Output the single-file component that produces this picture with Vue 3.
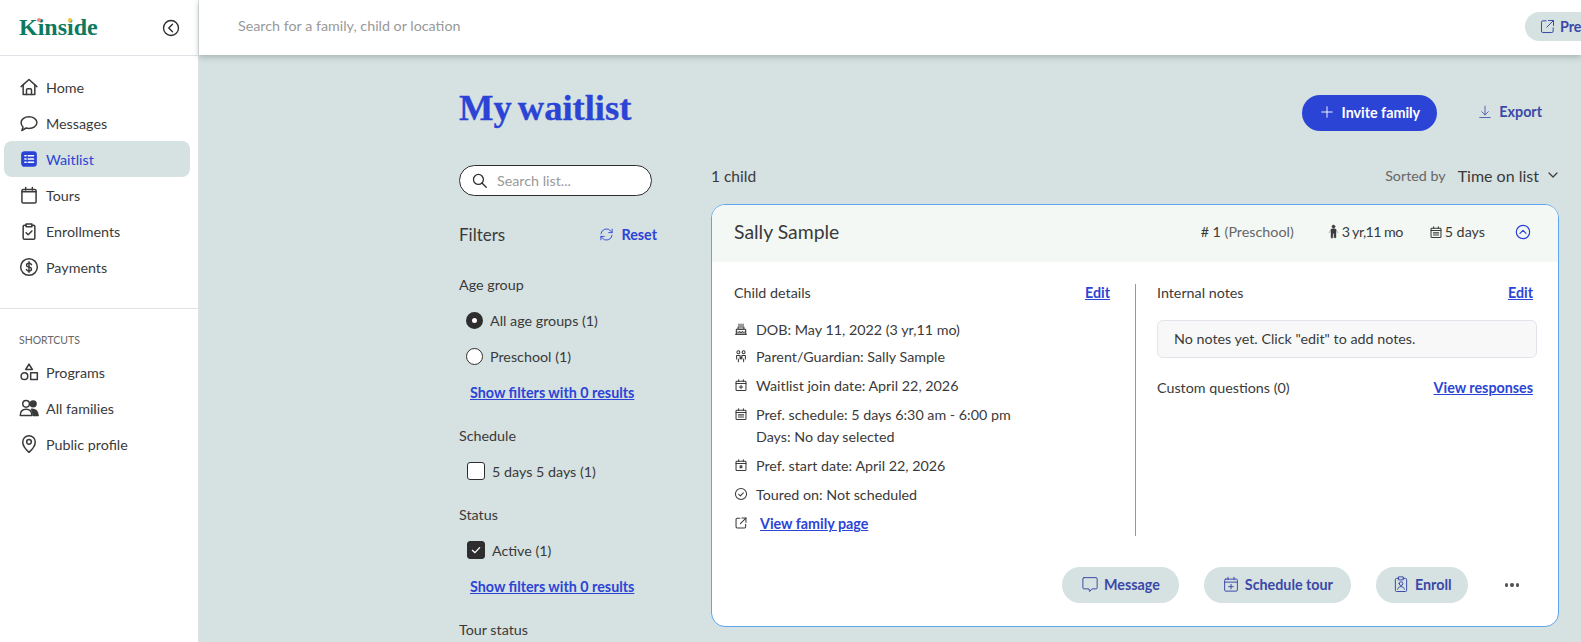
<script setup>
const circle = (cx, cy, r) => `M${cx - r} ${cy}a${r} ${r} 0 1 0 ${r * 2} 0a${r} ${r} 0 1 0 ${-r * 2} 0z`

const icons = {
  home: ['M2.500 11.500 12 3l9.500 8.500', 'M5 9.500V21h14V9.500', 'M9 21v-5.500a1.500 1.500 0 0 1 1.500-1.500h3a1.500 1.500 0 0 1 1.500 1.500V21'],
  message: ['M12 4.500c5 0 9.500 2.800 9.500 7s-4.500 7-9.500 7c-1.200 0-2.400-.2-3.500-.5L3.500 21l1.300-4.200C3.300 15.500 2.500 13.600 2.500 11.500c0-4.200 4.500-7 9.500-7z'],
  calendar: ['M5 5.500h14a1.500 1.500 0 0 1 1.500 1.500v13a1.500 1.500 0 0 1-1.500 1.500H5A1.500 1.500 0 0 1 3.500 20V7A1.500 1.500 0 0 1 5 5.500z', 'M3.500 8h17', 'M8 3v3M16 3v3'],
  clipboard: ['M8.500 5H6.500A1.500 1.500 0 0 0 5 6.500v14A1.500 1.500 0 0 0 6.500 22h11a1.500 1.500 0 0 0 1.500-1.500v-14A1.500 1.500 0 0 0 17.500 5h-2', 'M8.500 3.500h7v3.500h-7z', 'M8.500 14l2.500 2.500 4.500-4.500'],
  dollar: [circle(12, 12, 10), 'M15 9.200c-.5-1.100-1.600-1.700-3-1.700-1.800 0-3 .9-3 2.300 0 3.200 6 1.400 6 4.600 0 1.400-1.300 2.300-3 2.300-1.500 0-2.600-.6-3.100-1.700', 'M12 5.800v12.400'],
  shapes: ['M12 2.500l4 6.500H8z', circle(6.500, 17, 4), 'M14 13h8v8h-8z'],
  pin: ['M12 22s-7.500-6.800-7.500-12.500a7.500 7.500 0 0 1 15 0C19.500 15.200 12 22 12 22z', circle(12, 9.500, 2.800)],
  external: ['M10 4H5.500A2 2 0 0 0 3.500 6v12.500a2 2 0 0 0 2 2H18a2 2 0 0 0 2-2V14', 'M13.500 3.500h7v7', 'M20.500 3.500 11 13'],
  cake: ['M4 12.500h16V21H4z', 'M4 16.500c2 1.500 4 1.500 5.500 0 1.500 1.500 3.500 1.500 5 0 1.500 1.500 3.500 1.500 5.500 0', 'M7 8.500h10v4H7z', 'M8.500 3.500v3M12 3.500v3M15.500 3.500v3', 'M2.500 21h19'],
  family: [circle(7.500, 5.500, 2.500), circle(16.500, 5.500, 2.500), 'M4.500 11h6v6M4.500 11v6M7.500 17v5', 'M13.500 11h6v6M13.500 11v6M16.500 17v5', circle(12, 15, 1.200)],
  calPlus: ['M5 5.500h14a1.500 1.500 0 0 1 1.500 1.500v13a1.500 1.500 0 0 1-1.500 1.500H5A1.500 1.500 0 0 1 3.500 20V7A1.500 1.500 0 0 1 5 5.500z', 'M3.500 9.500h17', 'M8 3v3M16 3v3', 'M12 12.500v6M9 15.500h6'],
  calLines: ['M5 5.500h14a1.500 1.500 0 0 1 1.500 1.500v13a1.500 1.500 0 0 1-1.500 1.500H5A1.500 1.500 0 0 1 3.500 20V7A1.500 1.500 0 0 1 5 5.500z', 'M3.500 9.500h17', 'M8 3v3M16 3v3', 'M7.500 13.500h9M7.500 17h9'],
  calDot: ['M5 5.500h14a1.500 1.500 0 0 1 1.500 1.500v13a1.500 1.500 0 0 1-1.500 1.500H5A1.500 1.500 0 0 1 3.500 20V7A1.500 1.500 0 0 1 5 5.500z', 'M3.500 9.500h17', 'M8 3v3M16 3v3', 'M10.500 13.500h3v3h-3z'],
  circleCheck: [circle(12, 12, 9.500), 'M8 12.500l3 2.800 5-5.300'],
  bubble: ['M4 3.500h16A1.500 1.500 0 0 1 21.500 5v12a1.500 1.500 0 0 1-1.500 1.500h-5.500L11.500 22l-1-3.500H4A1.500 1.500 0 0 1 2.500 17V5A1.500 1.500 0 0 1 4 3.500z'],
  badge: ['M9 2.500h6v4H9z', 'M9 4.500H6A1.500 1.500 0 0 0 4.500 6v14.500A1.500 1.500 0 0 0 6 22h12a1.500 1.500 0 0 0 1.500-1.500V6A1.500 1.500 0 0 0 18 4.500h-3', circle(12, 11.500, 2.500), 'M7.500 19c.5-2.500 2.300-3.500 4.500-3.500s4 1 4.500 3.500']
}

const navItems = [
  { label: 'Home', icon: 'home' },
  { label: 'Messages', icon: 'message' },
  { label: 'Waitlist', icon: 'list', active: true },
  { label: 'Tours', icon: 'calendar' },
  { label: 'Enrollments', icon: 'clipboard' },
  { label: 'Payments', icon: 'dollar' }
]

const shortcuts = [
  { label: 'Programs', icon: 'shapes' },
  { label: 'All families', icon: 'people' },
  { label: 'Public profile', icon: 'pin' }
]

const details = [
  { icon: 'cake', lines: ['DOB: May 11, 2022 (3 yr,11 mo)'] },
  { icon: 'family', lines: ['Parent/Guardian: Sally Sample'] },
  { icon: 'calPlus', lines: ['Waitlist join date: April 22, 2026'] },
  { icon: 'calLines', lines: ['Pref. schedule: 5 days 6:30 am - 6:00 pm', 'Days: No day selected'] },
  { icon: 'calDot', lines: ['Pref. start date: April 22, 2026'] },
  { icon: 'circleCheck', lines: ['Toured on: Not scheduled'] }
]

const actions = [
  { label: 'Message', icon: 'bubble' },
  { label: 'Schedule tour', icon: 'calPlus' },
  { label: 'Enroll', icon: 'badge' }
]
</script>

<template>
  <div class="app-shell">
    <aside class="sidebar">
      <div class="brand">
        <div class="logo">
          Kinside
          <span class="logo-dot dot-pink"></span>
          <span class="logo-dot dot-yellow"></span>
        </div>
        <svg class="collapse-icon" viewBox="0 0 24 24">
          <circle cx="12" cy="12" r="10" />
          <path d="M14 7l-5 5 5 5" />
        </svg>
      </div>

      <nav class="nav-main">
        <div
          v-for="item in navItems"
          :key="item.label"
          class="nav-item"
          :class="{ active: item.active }"
        >
          <svg v-if="item.icon === 'list'" class="nav-icon" viewBox="0 0 24 24">
            <rect class="list-bg" x="3.500" y="3.500" width="17" height="17" rx="3" />
            <path class="list-lines" d="M7 8h1.500M11 8h6.500M7 12h1.500M11 12h6.500M7 16h1.500M11 16h6.500" />
          </svg>
          <svg v-else class="nav-icon" viewBox="0 0 24 24">
            <path v-for="d in icons[item.icon]" :key="d" :d="d" />
          </svg>
          <span>{{ item.label }}</span>
        </div>
      </nav>

      <div class="nav-shortcuts">
        <div class="shortcuts-title">SHORTCUTS</div>
        <div v-for="item in shortcuts" :key="item.label" class="nav-item">
          <svg v-if="item.icon === 'people'" class="nav-icon people" viewBox="0 0 24 24">
            <circle cx="8.500" cy="7" r="4" />
            <circle class="solid" cx="17" cy="7" r="3.500" />
            <path d="M1.500 21c0-5 3-7.500 7-7.500s7 2.500 7 7.500z" />
            <path class="solid" d="M15 13.500c4.500-.5 7.500 2.500 8 7.500h-6c0-3-.5-5.500-2-7.500z" />
          </svg>
          <svg v-else class="nav-icon" viewBox="0 0 24 24">
            <path v-for="d in icons[item.icon]" :key="d" :d="d" />
          </svg>
          <span>{{ item.label }}</span>
        </div>
      </div>
    </aside>

    <div class="main">
      <header class="topbar">
        <span class="top-search">Search for a family, child or location</span>
        <div class="preview-btn">
          <svg viewBox="0 0 24 24">
            <path v-for="d in icons.external" :key="d" :d="d" />
          </svg>
          <span>Preview</span>
        </div>
      </header>

      <div class="content">
        <div class="title-row">
          <h1 class="page-title">My waitlist</h1>
          <div class="title-actions">
            <button class="invite-btn">
              <svg viewBox="0 0 24 24"><path d="M12 3v18M3 12h18" /></svg>
              Invite family
            </button>
            <div class="export">
              <svg viewBox="0 0 24 24"><path d="M12 2v15M6.500 11.500 12 17l5.500-5.500M3 21.500h18" /></svg>
              Export
            </div>
          </div>
        </div>

        <div class="columns">
          <div class="filters">
            <div class="list-search">
              <svg viewBox="0 0 24 24"><circle cx="10.500" cy="10.500" r="7" /><path d="M15.500 15.500 21.500 21.500" /></svg>
              <span>Search list...</span>
            </div>

            <div class="filters-head">
              <span class="filters-title">Filters</span>
              <span class="reset">
                <svg viewBox="0 0 24 24">
                  <path d="M3 11a9 9 0 0 1 16-4.500L21 9M21 3.500V9h-5.500" />
                  <path d="M21 13a9 9 0 0 1-16 4.500L3 15M3 20.500V15h5.500" />
                </svg>
                Reset
              </span>
            </div>

            <div class="filter-label first">Age group</div>
            <div class="option radio"><span class="radio-mark on"></span>All age groups (1)</div>
            <div class="option radio"><span class="radio-mark"></span>Preschool (1)</div>
            <a class="zero-link">Show filters with 0 results</a>

            <div class="filter-label">Schedule</div>
            <div class="option"><span class="check-mark"></span>5 days 5 days (1)</div>

            <div class="filter-label status">Status</div>
            <div class="option">
              <span class="check-mark on">
                <svg viewBox="0 0 24 24"><path d="M6.500 12.500l4 3.500 7-7.500" /></svg>
              </span>
              Active (1)
            </div>
            <a class="zero-link">Show filters with 0 results</a>

            <div class="filter-label">Tour status</div>
          </div>

          <div class="results">
            <div class="results-head">
              <span class="child-count">1 child</span>
              <div class="sort">
                <span class="sort-label">Sorted by</span>
                <span class="sort-value">Time on list</span>
                <svg viewBox="0 0 24 24"><path d="M4 8l8 8 8-8" /></svg>
              </div>
            </div>

            <section class="card">
              <div class="card-head">
                <span class="child-name">Sally Sample</span>
                <div class="head-meta">
                  <span class="rank"># 1 <em>(Preschool)</em></span>
                  <span class="meta age">
                    <svg viewBox="0 0 24 24">
                      <circle cx="12" cy="4" r="2.500" />
                      <path d="M8 22V9.500a2 2 0 0 1 2-2h4a2 2 0 0 1 2 2V22h-3v-7h-2v7zM5 14l3-5M19 14l-3-5" />
                    </svg>
                    3 yr,11 mo
                  </span>
                  <span class="meta days">
                    <svg viewBox="0 0 24 24">
                      <path d="M5 5.500h14a1.500 1.500 0 0 1 1.500 1.500v13a1.500 1.500 0 0 1-1.500 1.500H5A1.500 1.500 0 0 1 3.500 20V7A1.500 1.500 0 0 1 5 5.500z" />
                      <path d="M3.500 9.500h17M8 3v3M16 3v3M7.500 13.500h9M7.500 17h9" />
                    </svg>
                    5 days
                  </span>
                  <svg class="collapse-card" viewBox="0 0 24 24">
                    <circle cx="12" cy="12" r="10" />
                    <path d="M7.500 14l4.500-4.500 4.500 4.500" />
                  </svg>
                </div>
              </div>

              <div class="card-body">
                <div class="details">
                  <div class="section-head">
                    <span>Child details</span>
                    <a class="link">Edit</a>
                  </div>
                  <div v-for="row in details" :key="row.icon" class="detail-row">
                    <svg viewBox="0 0 24 24">
                      <path v-for="d in icons[row.icon]" :key="d" :d="d" />
                    </svg>
                    <div>
                      <div v-for="line in row.lines" :key="line" class="detail-line">{{ line }}</div>
                    </div>
                  </div>
                  <div class="detail-row family-link">
                    <svg viewBox="0 0 24 24">
                      <path v-for="d in icons.external" :key="d" :d="d" />
                    </svg>
                    <a class="link">View family page</a>
                  </div>
                </div>

                <div class="notes">
                  <div class="section-head">
                    <span>Internal notes</span>
                    <a class="link">Edit</a>
                  </div>
                  <div class="notes-box">No notes yet. Click "edit" to add notes.</div>
                  <div class="section-head questions">
                    <span>Custom questions (0)</span>
                    <a class="link">View responses</a>
                  </div>
                </div>
              </div>

              <div class="card-actions">
                <button v-for="action in actions" :key="action.label" class="action-btn">
                  <svg viewBox="0 0 24 24">
                    <path v-for="d in icons[action.icon]" :key="d" :d="d" />
                  </svg>
                  {{ action.label }}
                </button>
                <span class="more"><i></i><i></i><i></i></span>
              </div>
            </section>
          </div>
        </div>
      </div>
    </div>
  </div>
</template>

<style>
html,
body {
  margin: 0;
  overflow: hidden;
}
</style>

<style scoped>
.app-shell {
  display: flex;
  width: 1581px;
  height: 642px;
  overflow: hidden;
  background-color: #d6e1e1;
  color: #3a3a3a;
  font-family: "Lato", "Liberation Sans", sans-serif;
  font-size: 14.3px;
}

svg {
  fill: none;
  stroke: currentColor;
  stroke-width: 1.8;
  stroke-linecap: round;
  stroke-linejoin: round;
  flex-shrink: 0;
}

.sidebar {
  width: 199px;
  flex-shrink: 0;
  background-color: #fff;
  border-right: 1px solid #dfe3e8;
  box-sizing: border-box;
}

.brand {
  display: flex;
  align-items: center;
  justify-content: space-between;
  height: 55px;
  padding: 0 18px 0 19px;
  border-bottom: 1px solid #dfe3e8;
}

.logo {
  position: relative;
  font-family: "Liberation Serif", serif;
  font-weight: 700;
  font-size: 24px;
  color: #0d7a5f;
}

.logo-dot {
  position: absolute;
  top: 4px;
  width: 4px;
  height: 4px;
  border-radius: 50%;
}

.dot-pink {
  left: 18px;
  background-color: #f08a8a;
}

.dot-yellow {
  left: 49px;
  background-color: #f4c542;
}

.collapse-icon {
  width: 18px;
  height: 18px;
  color: #2c2c2c;
}

.nav-main {
  padding-top: 13px;
  padding-bottom: 23px;
  border-bottom: 1px solid #dfe3e8;
}

.nav-item {
  display: flex;
  align-items: center;
  gap: 7px;
  height: 36px;
  margin: 0 8px 0 4px;
  padding-left: 15px;
  border-radius: 8px;
}

.nav-item.active {
  background-color: #d6e1e1;
  color: #2b44d6;
}

.nav-icon {
  width: 20px;
  height: 20px;
}

.list-bg {
  fill: #2b44d6;
  stroke: #2b44d6;
}

.list-lines {
  stroke: #fff;
  stroke-width: 1.8;
}

.people .solid {
  fill: currentColor;
}

.shortcuts-title {
  padding: 24px 0 7px 19px;
  font-size: 10.5px;
  line-height: 14px;
  color: #666;
}

.main {
  flex: 1;
  min-width: 0;
}

.topbar {
  display: flex;
  align-items: center;
  justify-content: space-between;
  height: 55px;
  box-sizing: border-box;
  padding: 0 0 3px 39px;
  background-color: #fff;
  box-shadow: 0 2px 6px rgba(70, 90, 90, 0.35);
  position: relative;
  overflow: hidden;
}

.top-search {
  color: #999;
  padding-bottom: 2px;
}

.preview-btn {
  display: flex;
  align-items: center;
  gap: 4px;
  width: 56px;
  height: 29px;
  padding-left: 14px;
  box-sizing: border-box;
  white-space: nowrap;
  background-color: #d6e1e1;
  border-radius: 15px 0 0 15px;
  color: #3a48a8;
  font-weight: 700;
  overflow: hidden;
}

.preview-btn svg {
  width: 17px;
  height: 17px;
  stroke-width: 1.4;
}

.content {
  padding: 0 22px 0 260px;
}

.title-row {
  display: flex;
  justify-content: space-between;
  align-items: flex-start;
  height: 110px;
  box-sizing: border-box;
  padding-top: 31px;
}

.page-title {
  margin: 0;
  font-family: "Liberation Serif", serif;
  font-size: 36.500px;
  line-height: 44px;
  font-weight: 700;
  word-spacing: -3px;
  color: #2b44d6;
  -webkit-text-stroke: 0.3px #2b44d6;
}

.title-actions {
  display: flex;
  align-items: center;
  gap: 41px;
  padding-top: 9px;
  padding-right: 17px;
}

.invite-btn {
  display: flex;
  align-items: center;
  justify-content: center;
  gap: 8px;
  width: 135px;
  height: 36px;
  padding-bottom: 3px;
  border: none;
  border-radius: 18px;
  background-color: #2b44d6;
  color: #fff;
  font: inherit;
  font-weight: 700;
}

.invite-btn svg {
  width: 14px;
  height: 14px;
  stroke-width: 1.6;
}

.export {
  display: flex;
  align-items: center;
  gap: 7px;
  padding-bottom: 3px;
  color: #3a48a8;
  font-weight: 700;
}

.export svg {
  width: 14px;
  height: 16px;
  stroke-width: 1.4;
}

.columns {
  display: flex;
}

.filters {
  width: 252px;
  flex-shrink: 0;
}

.list-search {
  display: flex;
  align-items: center;
  gap: 9px;
  width: 193px;
  height: 31px;
  box-sizing: border-box;
  padding-left: 11px;
  border: 1px solid #2e2e2e;
  border-radius: 16px;
  background-color: #fff;
  color: #999;
}

.list-search svg {
  width: 17px;
  height: 17px;
  color: #2e2e2e;
}

.filters-head {
  display: flex;
  justify-content: space-between;
  align-items: center;
  width: 198px;
  margin-top: 27px;
  height: 22px;
}

.filters-title {
  font-size: 17px;
}

.reset {
  display: flex;
  align-items: center;
  gap: 7px;
  color: #2b44d6;
  font-weight: 700;
}

.reset svg {
  width: 15px;
  height: 15px;
  stroke-width: 1.4;
}

.filter-label {
  margin-top: 23px;
  line-height: 20px;
}

.filter-label.first {
  margin-top: 30px;
}

.filter-label.status {
  margin-top: 16px;
}

.option {
  display: flex;
  align-items: center;
  gap: 7px;
  height: 36px;
  padding-left: 8px;
}

.filter-label + .option {
  margin-top: 7px;
}

.option.radio {
  padding-left: 7px;
}

.radio-mark {
  width: 15px;
  height: 15px;
  border: 1px solid #2e2e2e;
  border-radius: 50%;
  background-color: #fff;
}

.radio-mark.on {
  width: 5px;
  height: 5px;
  border: 6px solid #2e2e2e;
}

.check-mark {
  display: flex;
  width: 16px;
  height: 16px;
  border: 1px solid #2e2e2e;
  border-radius: 3px;
  background-color: #fff;
}

.check-mark.on {
  background-color: #2e2e2e;
  color: #fff;
}

.check-mark svg {
  width: 16px;
  height: 16px;
  stroke-width: 2;
}

.zero-link {
  display: block;
  margin-top: 9px;
  padding-left: 11px;
  line-height: 20px;
  color: #2b44d6;
  font-weight: 700;
  text-decoration: underline;
}

.results {
  flex: 1;
  min-width: 0;
}

.results-head {
  display: flex;
  justify-content: space-between;
  align-items: center;
  height: 22px;
  margin-bottom: 17px;
}

.child-count {
  font-size: 15.500px;
}

.sort {
  display: flex;
  align-items: center;
  padding-bottom: 2px;
}

.sort-label {
  color: #666;
  margin-right: 12px;
}

.sort-value {
  font-size: 16px;
  margin-right: 8px;
}

.sort svg {
  width: 12px;
  height: 12px;
  stroke-width: 2.4;
}

.card {
  box-sizing: border-box;
  height: 423px;
  border: 1px solid #5ea5f0;
  border-radius: 14px;
  background-color: #fff;
  overflow: hidden;
}

.card-head {
  display: flex;
  justify-content: space-between;
  align-items: center;
  height: 57px;
  box-sizing: border-box;
  padding: 0 27px 4px 22px;
  background-color: #f3f8f5;
}

.child-name {
  font-size: 19.400px;
}

.head-meta {
  display: flex;
  align-items: center;
}

.rank em {
  font-style: normal;
  color: #666;
}

.meta {
  display: flex;
  align-items: center;
  gap: 3px;
}

.meta svg {
  width: 14px;
  height: 14px;
}

.age {
  margin-left: 32px;
  gap: 1px;
  letter-spacing: -0.6px;
}

.age svg {
  width: 15px;
  height: 17px;
  fill: currentColor;
  stroke-width: 0.6;
}

.days {
  margin-left: 26px;
  gap: 2px;
}

.collapse-card {
  width: 16px;
  height: 16px;
  margin-left: 30px;
  color: #2b44d6;
}

.card-body {
  display: flex;
  height: 252px;
  margin-top: 22px;
}

.details {
  width: 424px;
  box-sizing: border-box;
  padding: 0 25px 0 22px;
  border-right: 1px solid #5ea5f0;
}

.section-head {
  display: flex;
  justify-content: space-between;
  align-items: center;
  line-height: 18px;
}

.link {
  color: #2b44d6;
  font-weight: 700;
  text-decoration: underline;
}

.detail-row {
  display: flex;
  align-items: flex-start;
  gap: 8px;
  margin-top: 8px;
}

.section-head + .detail-row {
  margin-top: 17px;
}

.section-head + .detail-row + .detail-row {
  margin-top: 6px;
}

.detail-row svg {
  width: 14px;
  height: 14px;
  margin-top: 3px;
  stroke-width: 1.8;
}

.detail-line {
  line-height: 21px;
}

.detail-line + .detail-line {
  margin-top: 1px;
}

.family-link .link {
  margin-left: 4px;
  line-height: 21px;
}

.notes {
  flex: 1;
  padding: 0 25px 0 21px;
}

.notes-box {
  box-sizing: border-box;
  height: 38px;
  margin-top: 18px;
  margin-right: -4px;
  padding-left: 16px;
  line-height: 36px;
  border: 1px solid #e2e4ec;
  border-radius: 6px;
  background-color: #f8f8f8;
}

.questions {
  margin-top: 21px;
}

.card-actions {
  display: flex;
  align-items: center;
  gap: 25px;
  margin-top: 31px;
  padding-left: 350px;
}

.action-btn {
  display: flex;
  align-items: center;
  justify-content: center;
  gap: 5px;
  height: 36px;
  padding: 0 18px 2px;
  border: none;
  border-radius: 18px;
  background-color: #d6e1e1;
  color: #3a48a8;
  font: inherit;
  font-weight: 700;
}

.action-btn:first-child {
  padding: 0 19px 2px;
}

.action-btn:nth-child(3) {
  padding: 0 16px 2px;
}

.action-btn svg {
  width: 18px;
  height: 18px;
  stroke-width: 1.3;
}

.more {
  display: flex;
  gap: 2px;
  margin-left: 12px;
}

.more i {
  width: 3.500px;
  height: 3.500px;
  border-radius: 50%;
  background-color: #555;
}
</style>
